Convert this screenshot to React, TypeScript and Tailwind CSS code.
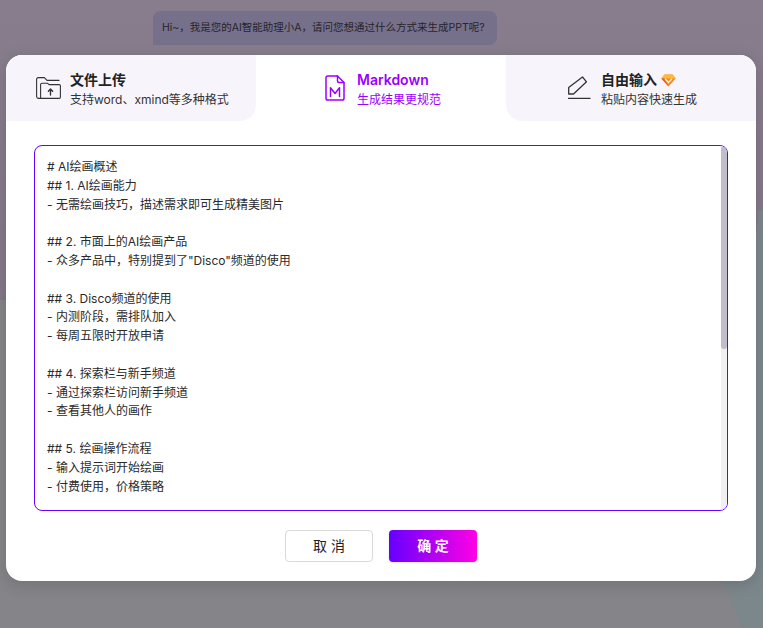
const markdown = `# AI绘画概述
## 1. AI绘画能力
- 无需绘画技巧，描述需求即可生成精美图片

## 2. 市面上的AI绘画产品
- 众多产品中，特别提到了"Disco"频道的使用

## 3. Disco频道的使用
- 内测阶段，需排队加入
- 每周五限时开放申请

## 4. 探索栏与新手频道
- 通过探索栏访问新手频道
- 查看其他人的画作

## 5. 绘画操作流程
- 输入提示词开始绘画
- 付费使用，价格策略`;

function UploadIcon() {
  return (
    <svg width="25" height="22" viewBox="0 0 25 22" fill="none" stroke="#333" strokeWidth="1.1" strokeLinejoin="round" strokeLinecap="round">
      <path d="M2.5 21.4C1.2 21.4 0.6 20.7 0.6 19.6V2.4C0.6 1.3 1.2 0.6 2.4 0.6H8.4L11 3.4H23" />
      <path d="M5 21.4H2.5" />
      <path d="M4.6 7.6C4.6 6.8 5.1 6.2 6 6.2H11.4L13 7.6H23.2C24 7.6 24.4 8.1 24.4 8.9V20.2C24.4 21 23.9 21.4 23.2 21.4H4.6V7.6Z" />
      <path d="M14.5 18V12.2M12.4 14.2L14.5 12L16.6 14.2" strokeWidth="1.4" />
    </svg>
  );
}

function MarkdownIcon() {
  return (
    <svg width="20" height="26" viewBox="0 0 20 26" fill="none" stroke="#9900ff" strokeWidth="1.5" strokeLinejoin="round" strokeLinecap="round">
      <path d="M12.5 1H2.8C1.7 1 1 1.7 1 2.8V23.2C1 24.3 1.7 25 2.8 25H17.2C18.3 25 19 24.3 19 23.2V7.5L12.5 1Z" />
      <path d="M12.5 1V6C12.5 7 13 7.5 14 7.5H19" />
      <path d="M5.5 21.5V12.8L10 18.5L14.5 12.8V21.5" />
    </svg>
  );
}

function PenIcon() {
  return (
    <svg width="23" height="24" viewBox="0 0 23 24" fill="none" stroke="#333" strokeWidth="1.3" strokeLinejoin="round" strokeLinecap="round">
      <path d="M0.7 11.5L14.5 1L18.5 5.8L5.5 18H0.7V11.5Z" />
      <path d="M0.6 22.4H22" />
    </svg>
  );
}

function DiamondIcon() {
  return (
    <svg width="15" height="13" viewBox="0 0 15 13">
      <path d="M3.5 0.5H11.5L14.7 4.5L7.5 12.5L0.3 4.5L3.5 0.5Z" fill="#f5891f" />
      <path d="M3.5 0.5H11.5L14.7 4.5H0.3L3.5 0.5Z" fill="#fdbb3e" />
      <path d="M4 4.8L7.5 8.5L11 4.8" fill="none" stroke="#fff3d8" strokeWidth="1.3" />
      <path d="M7.5 12.5L0.3 4.5H3L7.5 12.5Z" fill="#f0562a" />
    </svg>
  );
}

export default function App() {
  return (
    <div className="relative h-[628px] w-[763px] overflow-hidden bg-gradient-to-b from-[#877d8c] to-[#807285] font-['Inter','Noto_Sans_CJK_SC',sans-serif]">
      {/* page behind the overlay */}
      <div className="absolute inset-x-0 bottom-0 top-[300px] bg-[#858488]" />
      <div className="absolute bottom-0 right-0 h-[418px] w-[63px] bg-[#7c878c] [clip-path:polygon(93%_0,100%_0,100%_100%,67%_100%,37%_89%)]" />

      {/* chat bubble under the overlay */}
      <div className="relative ml-[153px] mt-[11px] flex h-[34px] w-[344px] items-center whitespace-nowrap rounded-r-lg rounded-tl-lg bg-[#76708a] px-[9px] text-[10.5px] text-[#27242c]">
        Hi~，我是您的AI智能助理小A，请问您想通过什么方式来生成PPT呢?
      </div>

      {/* dialog */}
      <div className="relative ml-[6px] mt-[10px] h-[526px] w-[750px] overflow-hidden rounded-2xl bg-white shadow-[0_4px_16px_rgba(0,0,0,0.15)]">
        <div className="flex h-[66px]">
          <div className="flex w-[250px] items-center gap-[9px] rounded-br-2xl bg-[#f7f5fb] pl-[30px]">
            <UploadIcon />
            <div className="mt-[4px]">
              <div className="text-[14px] font-semibold leading-[20px] text-[#222]">文件上传</div>
              <div className="text-[12px] leading-[20px] text-[#333]">支持word、xmind等多种格式</div>
            </div>
          </div>
          <div className="flex w-[250px] items-center gap-[12px] pl-[69px]">
            <MarkdownIcon />
            <div className="mt-[4px]">
              <div className="text-[14px] font-semibold leading-[20px] text-[#9900ff]">Markdown</div>
              <div className="text-[12px] leading-[20px] text-[#9900ff]">生成结果更规范</div>
            </div>
          </div>
          <div className="flex w-[250px] items-center gap-[10px] rounded-bl-2xl bg-[#f7f5fb] pl-[62px]">
            <PenIcon />
            <div className="mt-[4px]">
              <div className="flex items-center gap-[4px] text-[14px] font-semibold leading-[20px] text-[#222]">
                自由输入
                <DiamondIcon />
              </div>
              <div className="text-[12px] leading-[20px] text-[#333]">粘贴内容快速生成</div>
            </div>
          </div>
        </div>

        <div className="relative mx-[28px] mt-[24px] h-[366px] overflow-hidden rounded-lg border border-[#6600ff] px-[12px] pt-[12px] text-[12px] leading-[18.8px] text-[#2a2a2a]">
          {markdown.split("\n").map((line, i) => (
            <div key={i} className="h-[18.8px]">{line}</div>
          ))}
          {/* scrollbar */}
          <div className="absolute inset-y-0 right-0 w-[6px] bg-[#f0f0f0]">
            <div className="h-[203px] rounded-[3px] bg-[#c2bdca]" />
          </div>
        </div>

        <div className="mt-[19px] flex justify-center gap-[16px]">
          <button className="h-[32px] w-[88px] rounded border border-[#d9d9d9] bg-white pb-[2px] text-[14px] text-[#222]">取 消</button>
          <button className="h-[32px] w-[88px] rounded bg-linear-to-r/srgb from-[#6600ff] to-[#ff00e5] pb-[2px] text-[14px] font-semibold text-white shadow-sm">确 定</button>
        </div>
      </div>
    </div>
  );
}
